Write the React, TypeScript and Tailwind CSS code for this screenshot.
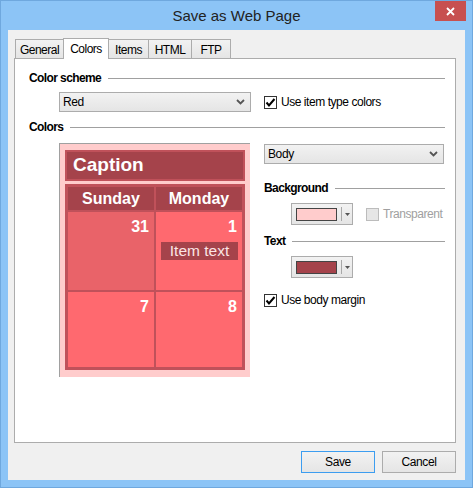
import React from "react";

const ui = { fontFamily: '"Liberation Sans", Arial, sans-serif' };
const arial = { fontFamily: '"Liberation Sans", Arial, sans-serif' };

function SectionHeader({ label, lineClass = "ml-[7px]" }: { label: string; lineClass?: string }) {
  return (
    <div className="flex items-center h-[14px]">
      <span className="font-bold text-[12px] tracking-[-0.6px] leading-[14px] text-black">{label}</span>
      <div className={`flex-1 h-px bg-[#a0a0a0] ${lineClass}`} />
    </div>
  );
}

function Chevron() {
  return (
    <svg width="9" height="6" viewBox="0 0 9 6">
      <path d="M1 1 L4.5 4.5 L8 1" stroke="#555" strokeWidth="1.8" fill="none" />
    </svg>
  );
}

function Select({ value, className }: { value: string; className: string }) {
  return (
    <div
      className={`shrink-0 flex items-center justify-between h-[20px] border border-[#acacac] bg-gradient-to-b from-[#f2f2f2] to-[#e5e5e5] pl-[3px] pr-[5px] ${className}`}
    >
      <span className="text-[12px] tracking-[-0.4px] text-black">{value}</span>
      <Chevron />
    </div>
  );
}

function Checkbox({ label, checked, disabled }: { label: string; checked?: boolean; disabled?: boolean }) {
  return (
    <div className="flex items-center whitespace-nowrap">
      <div
        className={`shrink-0 w-[13px] h-[13px] border flex items-center justify-center ${
          disabled ? "border-[#bcbcbc] bg-[#e6e6e6]" : "border-[#333] bg-white"
        }`}
      >
        {checked && (
          <svg width="11" height="11" viewBox="0 0 11 11">
            <path d="M1.5 5.5 L4 8.5 L9.5 2" stroke="#000" strokeWidth="2" fill="none" />
          </svg>
        )}
      </div>
      <span className={`ml-[4px] text-[12px] tracking-[-0.45px] ${disabled ? "text-[#a0a0a0]" : "text-black"}`}>{label}</span>
    </div>
  );
}

function ColorButton({ color }: { color: string }) {
  return (
    <div className="shrink-0 flex items-center w-[62px] h-[22px] border border-[#acacac] bg-gradient-to-b from-[#f2f2f2] to-[#e5e5e5] pl-[4px]">
      <div className="w-[41px] h-[13px] border border-[#444]" style={{ backgroundColor: color }} />
      <div className="ml-[4px] w-px h-[14px] bg-[#a8a8a8]" />
      <svg className="ml-[3px]" width="5" height="3" viewBox="0 0 5 3">
        <path d="M0 0 L5 0 L2.5 3 Z" fill="#555" />
      </svg>
    </div>
  );
}

function Cell({ day, dark, children }: { day: string; dark?: boolean; children?: React.ReactNode }) {
  return (
    <div className={`flex flex-col items-end px-[5px] pt-[6px] ${dark ? "bg-[#e96369]" : "bg-[#ff696f]"}`}>
      <span className="font-bold text-[16px] leading-[18px] text-white">{day}</span>
      {children}
    </div>
  );
}

function Preview() {
  return (
    <div className="shrink-0 w-[191px] h-[234px] border-l border-t border-[#a0a0a0] bg-[#ffcccc] pl-[5px] pt-[6px]" style={arial}>
      <div className="w-[180px] h-[31px] border-2 border-[#c0515a] bg-[#a5434b] flex items-center pl-[6px]">
        <span className="font-bold text-[19px] text-white">Caption</span>
      </div>
      <div className="mt-[3px] w-[180px] h-[186px] bg-[#c0515a] p-[3px] grid grid-cols-[86px_86px] grid-rows-[23px_78px_75px] gap-[2px]">
        <div className="bg-[#a5434b] flex items-center justify-center font-bold text-[16px] text-white">Sunday</div>
        <div className="bg-[#a5434b] flex items-center justify-center font-bold text-[16px] text-white">Monday</div>
        <Cell day="31" dark />
        <Cell day="1">
          <div className="mt-[6px] -mr-[1px] w-[77px] h-[18px] bg-[#a5434b] flex items-center justify-center text-[15.5px] text-[#fbe5e5]">
            Item text
          </div>
        </Cell>
        <Cell day="7" />
        <Cell day="8" />
      </div>
    </div>
  );
}

function Tab({ label, w, active }: { label: string; w: string; active?: boolean }) {
  return active ? (
    <div className={`relative z-10 -ml-px -mb-px h-[21px] ${w} border border-b-0 border-[#acacac] bg-white flex justify-center pt-[1px] text-[12px] tracking-[-0.5px] text-black`}>
      {label}
    </div>
  ) : (
    <div className={`-ml-px h-[19px] ${w} border border-b-0 border-[#acacac] bg-gradient-to-b from-[#f2f2f2] to-[#e5e5e5] flex justify-center pt-[1px] text-[12px] tracking-[-0.5px] text-black`}>
      {label}
    </div>
  );
}

export default function App() {
  return (
    <div className="w-[473px] h-[488px] bg-[#8cc4f6] border border-[#6fa8de] flex flex-col" style={ui}>
      {/* title bar */}
      <div className="relative h-[29px] flex items-center justify-center" style={arial}>
        <span className="text-[15px] text-[#222] mt-[1px]">Save as Web Page</span>
        <div className="absolute right-[6px] top-0 w-[31px] h-[20px] bg-[#c75050] flex items-center justify-center">
          <svg width="9" height="9" viewBox="0 0 9 9">
            <path d="M1 1 L8 8 M8 1 L1 8" stroke="#fff" strokeWidth="1.8" />
          </svg>
        </div>
      </div>
      {/* client */}
      <div className="mx-[7px] h-[450px] bg-[#f0f0f0] flex flex-col pt-[8px] pl-[6px] pr-[9px]">
        <div className="flex items-end h-[20px] pl-[2px]">
          <Tab label="General" w="w-[49px]" />
          <Tab label="Colors" w="w-[46px]" active />
          <Tab label="Items" w="w-[41px]" />
          <Tab label="HTML" w="w-[44px]" />
          <Tab label="FTP" w="w-[40px]" />
        </div>
        <div className="h-[385px] border border-[#acacac] bg-white flex flex-col pl-[14px] pr-[10px] pt-[12px]">
          <SectionHeader label="Color scheme" />
          <div className="mt-[7px] ml-[30px] flex items-center">
            <Select value="Red" className="w-[192px]" />
            <div className="ml-[13px]">
              <Checkbox label="Use item type colors" checked />
            </div>
          </div>
          <div className="mt-[8px]">
            <SectionHeader label="Colors" />
          </div>
          <div className="mt-[9px] ml-[30px] flex">
            <Preview />
            <div className="ml-[14px] w-[181px] shrink-0 flex flex-col pt-[1px]">
              <Select value="Body" className="w-[180px]" />
              <div className="mt-[17px]">
                <SectionHeader label="Background" />
              </div>
              <div className="mt-[8px] ml-[27px] flex items-center">
                <ColorButton color="#ffcccc" />
                <div className="ml-[13px]">
                  <Checkbox label="Transparent" disabled />
                </div>
              </div>
              <div className="mt-[9px]">
                <SectionHeader label="Text" />
              </div>
              <div className="mt-[8px] ml-[27px] flex">
                <ColorButton color="#a5434b" />
              </div>
              <div className="mt-[13px]">
                <Checkbox label="Use body margin" checked />
              </div>
            </div>
          </div>
        </div>
        <div className="mt-[8px] flex justify-end gap-[7px]">
          <button className="w-[74px] h-[22px] border border-[#3c9df0] bg-gradient-to-b from-[#f2f2f2] to-[#e5e5e5] text-[12px] tracking-[-0.4px] text-black">
            Save
          </button>
          <button className="w-[74px] h-[22px] border border-[#acacac] bg-gradient-to-b from-[#f2f2f2] to-[#e5e5e5] text-[12px] tracking-[-0.4px] text-black">
            Cancel
          </button>
        </div>
      </div>
    </div>
  );
}
